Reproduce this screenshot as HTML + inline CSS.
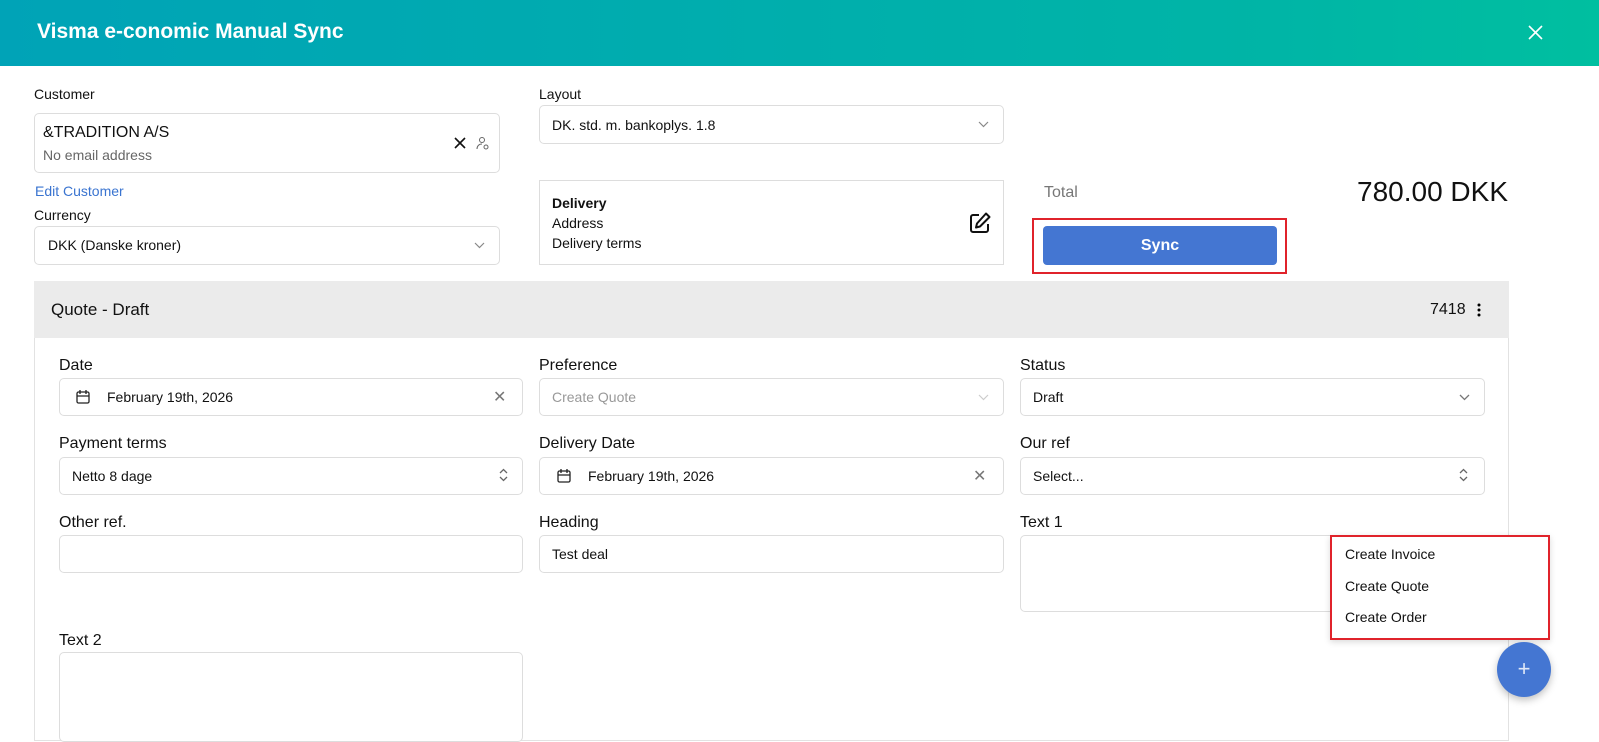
<!DOCTYPE html>
<html><head><meta charset="utf-8"><style>
*{box-sizing:border-box;margin:0;padding:0}
body{width:1599px;height:730px;overflow:hidden;background:#fff;font-family:"Liberation Sans",sans-serif;color:#111;position:relative}
.hdr{position:absolute;left:0;top:0;width:1599px;height:66px;background:linear-gradient(90deg,#00a3b7,#00b5a6 80%,#00bfa0)}
.hdr h1{position:absolute;left:37px;top:20px;font-size:21px;color:#fff;font-weight:bold}
.a{position:absolute}
.lbl{position:absolute;font-size:14px;color:#111}
.lbl2{position:absolute;font-size:16px;color:#111}
.box{position:absolute;border:1px solid #ddd;border-radius:5px;background:#fff}
.t{position:absolute;font-size:14px;color:#111}
.x{position:absolute;font-size:16px;color:#777}
</style></head><body>
<div class="hdr"><h1>Visma e-conomic Manual Sync</h1>
<svg class="a" style="left:1528px;top:25px" width="15" height="15"><path d="M1 1L14 14M14 1L1 14" stroke="#fff" stroke-width="1.6"/></svg></div>

<div class="lbl" style="left:34px;top:86px">Customer</div>
<div class="box" style="left:34px;top:113px;width:466px;height:60px"></div>
<div class="t" style="left:43px;top:124px;font-size:16px">&amp;TRADITION A/S</div>
<div class="t" style="left:43px;top:147px;color:#666">No email address</div>
<svg class="a" style="left:454px;top:137px" width="12" height="12"><path d="M1 1L11 11M11 1L1 11" stroke="#111" stroke-width="1.6"/></svg>
<svg class="a" style="left:476px;top:136px" width="14" height="14"><circle cx="6" cy="4" r="2.5" fill="none" stroke="#666"/><path d="M1 13c0-3 2-5 5-5" fill="none" stroke="#666"/><circle cx="10" cy="11" r="2" fill="none" stroke="#666"/></svg>
<div class="t" style="left:35px;top:183px;color:#3a74d0">Edit Customer</div>
<div class="lbl" style="left:34px;top:207px">Currency</div>
<div class="box" style="left:34px;top:226px;width:466px;height:39px"></div>
<div class="t" style="left:48px;top:237px">DKK (Danske kroner)</div>
<svg class="a" style="left:474px;top:242px" width="11" height="7"><path d="M1 1l4.5 4.5L10 1" fill="none" stroke="#888" stroke-width="1.2"/></svg>

<div class="lbl" style="left:539px;top:86px">Layout</div>
<div class="box" style="left:539px;top:105px;width:465px;height:39px"></div>
<div class="t" style="left:552px;top:117px">DK. std. m. bankoplys. 1.8</div>
<svg class="a" style="left:978px;top:121px" width="11" height="7"><path d="M1 1l4.5 4.5L10 1" fill="none" stroke="#888" stroke-width="1.2"/></svg>

<div class="box" style="left:539px;top:180px;width:465px;height:85px;border-radius:0"></div>
<div class="t" style="left:552px;top:195px;font-weight:bold">Delivery</div>
<div class="t" style="left:552px;top:215px">Address</div>
<div class="t" style="left:552px;top:235px">Delivery terms</div>
<svg class="a" style="left:968px;top:211px" width="24" height="24"><path d="M11 4H5a2 2 0 0 0-2 2v13a2 2 0 0 0 2 2h13a2 2 0 0 0 2-2v-6M18 2.5l3.5 3.5L12 15.5l-4 1 1-4z" fill="none" stroke="#111" stroke-width="2" stroke-linejoin="round"/></svg>

<div class="t" style="left:1044px;top:184px;font-size:16px;color:#777">Total</div>
<div class="t" style="left:1300px;top:176px;width:208px;text-align:right;font-size:28px">780.00 DKK</div>
<div class="a" style="left:1032px;top:218px;width:255px;height:56px;border:2px solid #e0232b"></div>
<div class="a" style="left:1043px;top:226px;width:234px;height:39px;background:#4476d2;border-radius:4px;color:#fff;font-weight:bold;font-size:16px;text-align:center;line-height:39px">Sync</div>

<div class="a" style="left:34px;top:281px;width:1475px;height:460px;border:1px solid #e2e2e2"></div>
<div class="a" style="left:34px;top:281px;width:1475px;height:57px;background:#ebebeb"></div>
<div class="t" style="left:51px;top:300px;font-size:17px">Quote - Draft</div>
<div class="t" style="left:1430px;top:301px;font-size:16px">7418</div>
<svg class="a" style="left:1476px;top:302px" width="6" height="16"><circle cx="3" cy="3" r="1.5"/><circle cx="3" cy="8" r="1.5"/><circle cx="3" cy="13" r="1.5"/></svg>

<div class="lbl2" style="left:59px;top:357px">Date</div>
<div class="box" style="left:59px;top:378px;width:464px;height:38px"></div>
<svg class="a" style="left:76px;top:389px" width="14" height="15"><rect x="1" y="3" width="12" height="11" rx="1.5" fill="none" stroke="#222" stroke-width="1.3"/><path d="M1 7h12M4 1v4M10 1v4" stroke="#222" stroke-width="1.3"/></svg>
<div class="t" style="left:107px;top:389px">February 19th, 2026</div>
<div class="x" style="left:493px;top:387px">✕</div>

<div class="lbl2" style="left:539px;top:357px">Preference</div>
<div class="box" style="left:539px;top:378px;width:465px;height:38px"></div>
<div class="t" style="left:552px;top:389px;color:#999">Create Quote</div>
<svg class="a" style="left:978px;top:394px" width="11" height="7"><path d="M1 1l4.5 4.5L10 1" fill="none" stroke="#ccc" stroke-width="1.2"/></svg>

<div class="lbl2" style="left:1020px;top:357px">Status</div>
<div class="box" style="left:1020px;top:378px;width:465px;height:38px"></div>
<div class="t" style="left:1033px;top:389px">Draft</div>
<svg class="a" style="left:1459px;top:394px" width="11" height="7"><path d="M1 1l4.5 4.5L10 1" fill="none" stroke="#777" stroke-width="1.3"/></svg>

<div class="lbl2" style="left:59px;top:435px">Payment terms</div>
<div class="box" style="left:59px;top:457px;width:464px;height:38px"></div>
<div class="t" style="left:72px;top:468px">Netto 8 dage</div>
<svg class="a" style="left:499px;top:468px" width="9" height="14"><path d="M1 5l3.5-3.5L8 5M1 9l3.5 3.5L8 9" fill="none" stroke="#666" stroke-width="1.3"/></svg>

<div class="lbl2" style="left:539px;top:435px">Delivery Date</div>
<div class="box" style="left:539px;top:457px;width:465px;height:38px"></div>
<svg class="a" style="left:557px;top:468px" width="14" height="15"><rect x="1" y="3" width="12" height="11" rx="1.5" fill="none" stroke="#222" stroke-width="1.3"/><path d="M1 7h12M4 1v4M10 1v4" stroke="#222" stroke-width="1.3"/></svg>
<div class="t" style="left:588px;top:468px">February 19th, 2026</div>
<div class="x" style="left:973px;top:466px">✕</div>

<div class="lbl2" style="left:1020px;top:435px">Our ref</div>
<div class="box" style="left:1020px;top:457px;width:465px;height:38px"></div>
<div class="t" style="left:1033px;top:468px">Select...</div>
<svg class="a" style="left:1459px;top:468px" width="9" height="14"><path d="M1 5l3.5-3.5L8 5M1 9l3.5 3.5L8 9" fill="none" stroke="#666" stroke-width="1.3"/></svg>

<div class="lbl2" style="left:59px;top:514px">Other ref.</div>
<div class="box" style="left:59px;top:535px;width:464px;height:38px"></div>
<div class="lbl2" style="left:539px;top:514px">Heading</div>
<div class="box" style="left:539px;top:535px;width:465px;height:38px"></div>
<div class="t" style="left:552px;top:546px">Test deal</div>
<div class="lbl2" style="left:1020px;top:514px">Text 1</div>
<div class="box" style="left:1020px;top:535px;width:465px;height:77px"></div>

<div class="lbl2" style="left:59px;top:632px">Text 2</div>
<div class="box" style="left:59px;top:652px;width:464px;height:90px"></div>

<div class="a" style="left:1330px;top:535px;width:220px;height:105px;background:#fff;border:2px solid #e0232b;box-shadow:0 2px 6px rgba(0,0,0,.15)"></div>
<div class="t" style="left:1345px;top:546px">Create Invoice</div>
<div class="t" style="left:1345px;top:578px">Create Quote</div>
<div class="t" style="left:1345px;top:609px">Create Order</div>
<div class="a" style="left:1497px;top:642px;width:54px;height:55px;border-radius:50%;background:#4476d2;box-shadow:0 3px 8px rgba(0,0,0,.25);color:#dfe8f8;font-size:22px;text-align:center;line-height:54px">+</div>
</body></html>
